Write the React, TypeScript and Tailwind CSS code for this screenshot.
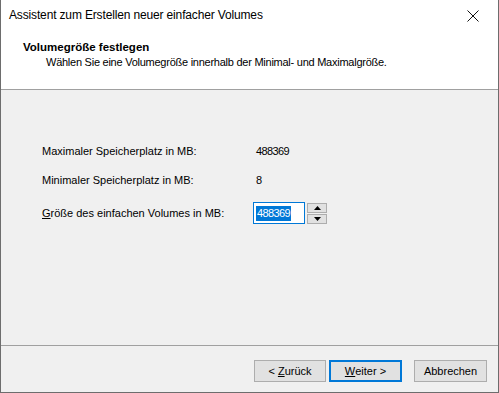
import React from "react";

function Spinner() {
  return (
    <div className="flex flex-col gap-px ml-[2px]">
      <div className="w-[20px] h-[10px] bg-[#e1e1e1] border border-[#adadad] flex items-center justify-center">
        <svg width="7" height="4" viewBox="0 0 7 4">
          <path d="M0 4 L3.5 0 L7 4 Z" fill="#000" />
        </svg>
      </div>
      <div className="w-[20px] h-[10px] bg-[#e1e1e1] border border-[#adadad] flex items-center justify-center">
        <svg width="7" height="4" viewBox="0 0 7 4">
          <path d="M0 0 L7 0 L3.5 4 Z" fill="#000" />
        </svg>
      </div>
    </div>
  );
}

export default function App() {
  return (
    <div
      className="w-[499px] h-[393px] flex flex-col bg-[#f0f0f0] border-l border-r border-b border-[#6d6d6d] text-[11px] leading-[15px] text-black"
      style={{ fontFamily: '"Liberation Sans", Arial, sans-serif' }}
    >
      {/* Title bar */}
      <div className="h-[31px] bg-white flex items-center justify-between pl-[8px] pr-[19px] shrink-0">
        <span className="text-[12px] tracking-[-0.15px]">Assistent zum Erstellen neuer einfacher Volumes</span>
        <svg width="12" height="12" viewBox="0 0 12 12">
          <path d="M0.5 0.5 L11.5 11.5 M11.5 0.5 L0.5 11.5" stroke="#111" strokeWidth="1" />
        </svg>
      </div>

      {/* Header */}
      <div className="h-[58px] bg-white pl-[22px] pt-[9px] shrink-0">
        <div className="font-bold text-[11.5px]">Volumegröße festlegen</div>
        <div className="pl-[23px] tracking-[-0.25px]">Wählen Sie eine Volumegröße innerhalb der Minimal- und Maximalgröße.</div>
      </div>
      <div className="h-px bg-[#a0a0a0] shrink-0" />

      {/* Body */}
      <div className="flex-1 pl-[41px] pt-[54px]">
        <div className="grid grid-cols-[211px_auto] items-center">
          <div className="h-[15px]">Maximaler Speicherplatz in MB:</div>
          <div className="pl-[3px] tracking-[-0.6px]">488369</div>
          <div className="h-[15px] mt-[14px]">Minimaler Speicherplatz in MB:</div>
          <div className="pl-[3px] mt-[14px]">8</div>
          <div className="mt-[14px]">
            <span className="underline">G</span>röße des einfachen Volumes in MB:
          </div>
          <div className="mt-[14px] flex items-center">
            <div className="w-[52px] h-[22px] bg-white border border-[#0078d7] flex items-center pl-[2px]">
              <span className="bg-[#0078d7] text-white px-px leading-[15px] tracking-[-0.6px]">488369</span>
            </div>
            <Spinner />
          </div>
        </div>
      </div>

      <div className="h-px bg-[#a0a0a0] shrink-0" />

      {/* Footer */}
      <div className="h-[46px] shrink-0 flex items-start justify-end pt-[14px] pr-[11px]">
        <button className="w-[72px] h-[22px] bg-[#e1e1e1] border border-[#adadad] flex items-center justify-center">
          &lt; <span className="underline ml-[3px]">Z</span>urück
        </button>
        <button className="w-[73px] h-[22px] ml-[3px] bg-[#e1e1e1] border-2 border-[#0078d7] flex items-center justify-center">
          <span className="underline">W</span>eiter &gt;
        </button>
        <button className="w-[73px] h-[22px] ml-[12px] bg-[#e1e1e1] border border-[#adadad] flex items-center justify-center">
          Abbrechen
        </button>
      </div>
    </div>
  );
}
